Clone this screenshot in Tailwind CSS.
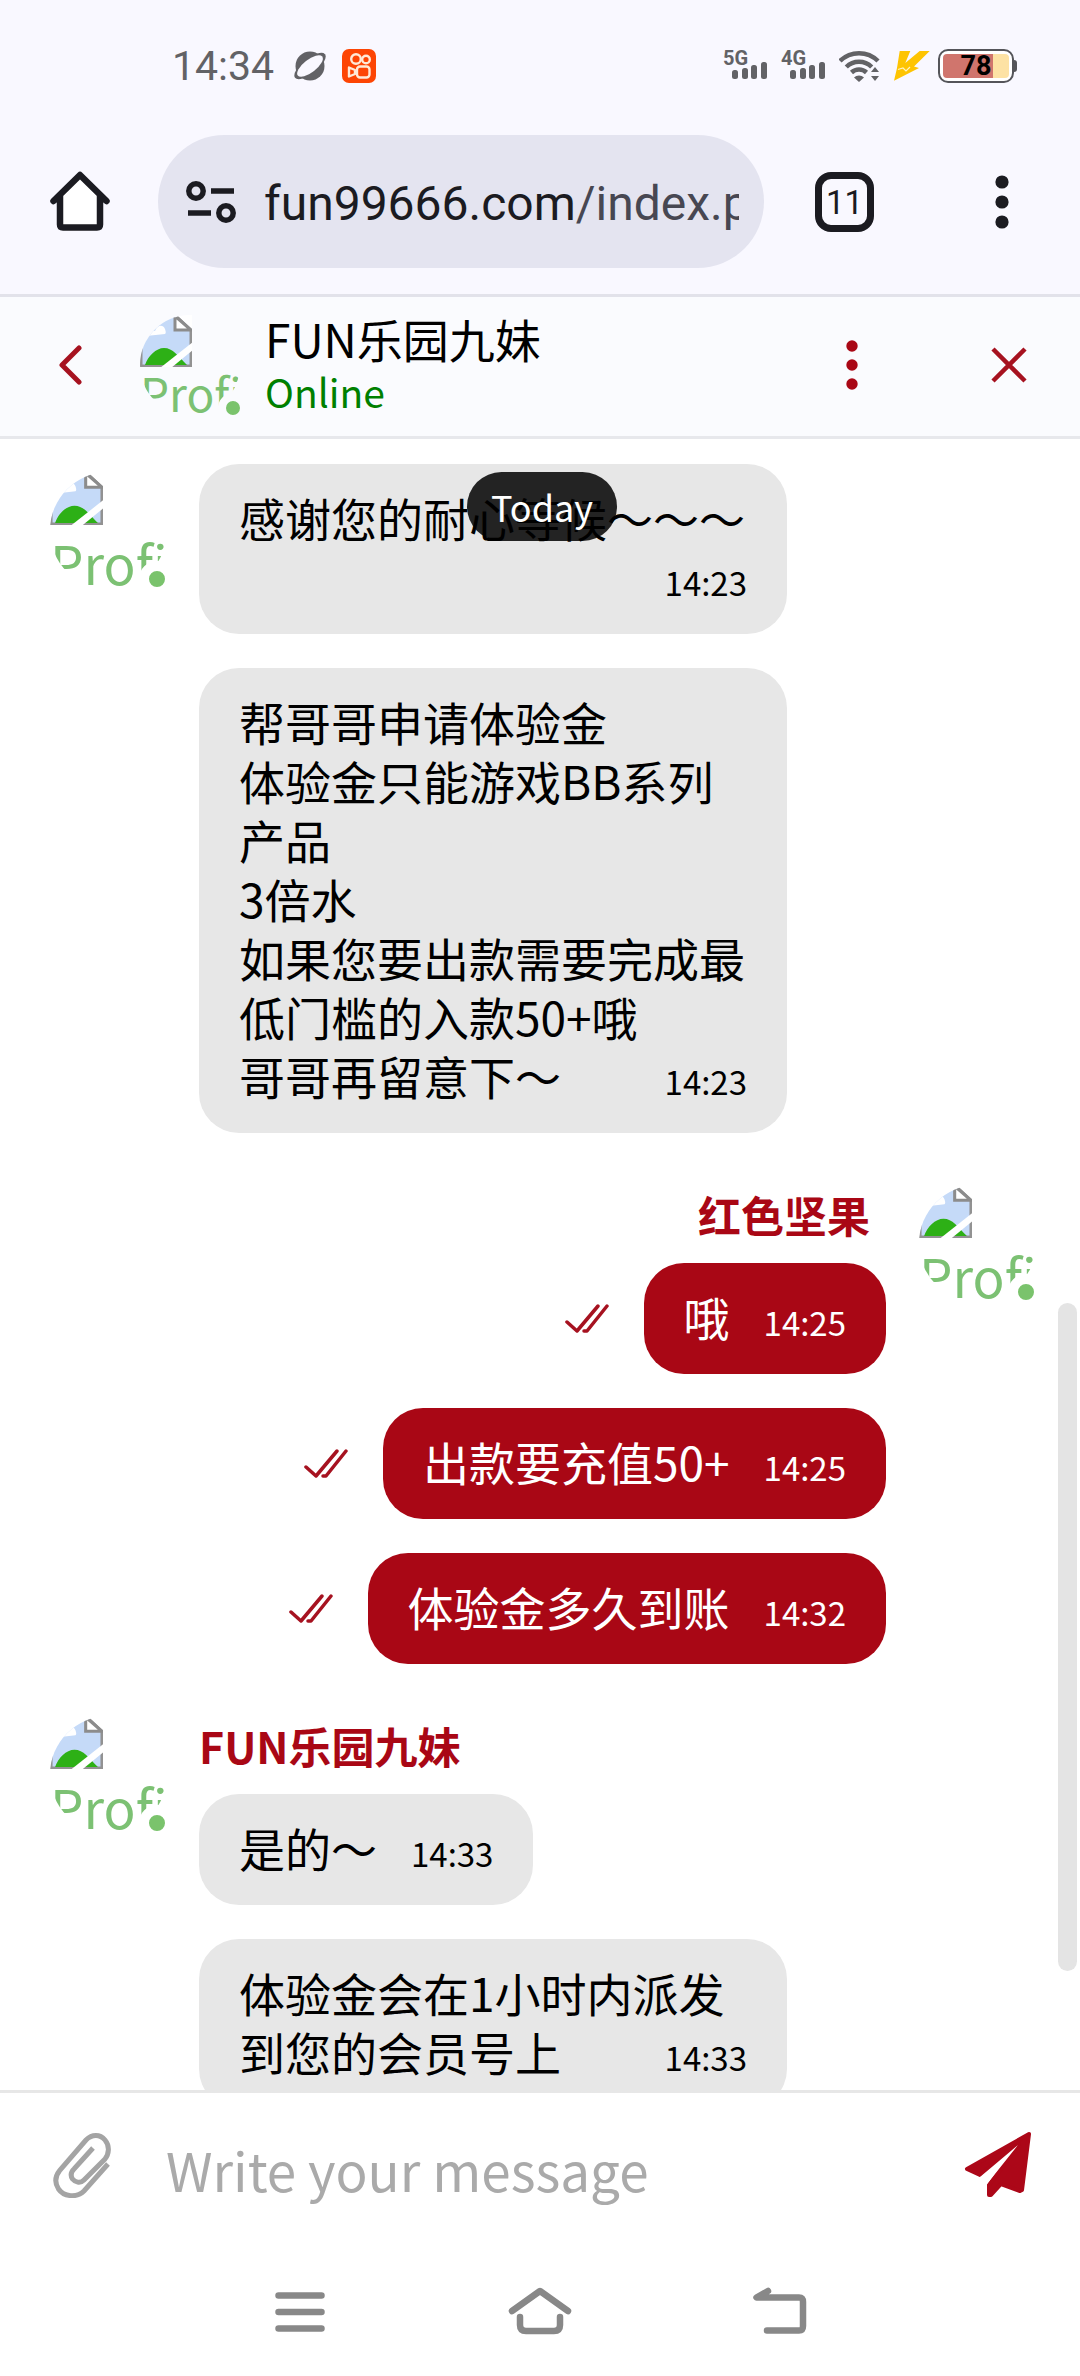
<!DOCTYPE html>
<html lang="zh-CN">
<head>
<meta charset="utf-8">
<meta name="viewport" content="width=device-width, initial-scale=1">
<title>FUN乐园九妹</title>
<script src="https://cdn.jsdelivr.net/npm/@tailwindcss/browser@4"></script>
</head>
<body class="flex h-screen flex-col overflow-hidden bg-white font-['Noto_Sans_CJK_SC',sans-serif] text-black">

<!-- shared icons -->
<svg class="hidden" aria-hidden="true">
  <symbol id="broken" viewBox="0 0 52 52">
    <path d="M1 1H36L51 15V51H1Z" fill="#c5daf8" stroke="#929292" stroke-width="3"/>
    <path d="M6 21c2-5 7-6 9-5c2-6 8-7 10-2c1 3 1 4 0 5z" fill="#fff"/>
    <path d="M5 50c3-9 11-17 19-17c9 0 14 8 23 17z" fill="#2db016"/>
    <path d="M35 1v14h16z" fill="#fff" stroke="#8c8c8c" stroke-width="3"/>
    <path d="M36 -1L53 14V-1Z" fill="#fff"/>
    <path d="M20 53H31L53 35V27Z" fill="#fff"/>
  </symbol>
  <symbol id="ticks" viewBox="0 0 44 30">
    <path d="M2 18L12 27L33 2M19 27L22 27L42 2" fill="none" stroke="#a61220" stroke-width="3.500" stroke-linecap="round" stroke-linejoin="round"/>
  </symbol>
</svg>

<!-- status bar -->
<div class="flex h-[132px] shrink-0 items-start justify-between bg-[#f9f8ff] pl-[172px] pr-[63px] pt-[42px] font-[Roboto,sans-serif] text-[#626266]">
  <div class="flex h-12 items-center">
    <span class="text-[41px] leading-[48px]">14:34</span>
    <svg class="ml-[18px] h-[34px] w-[36px]" viewBox="0 0 36 34" aria-hidden="true">
      <circle cx="18" cy="17" r="14.5" fill="#626266"/>
      <g transform="rotate(-38 18 17)"><ellipse cx="18" cy="17" rx="19" ry="7.500" fill="#626266"/><ellipse cx="18" cy="17" rx="15.500" ry="6.500" fill="#f9f8ff"/></g>
    </svg>
    <svg class="ml-[14px] size-[34px]" viewBox="0 0 34 34" aria-hidden="true">
      <rect width="34" height="34" rx="7" fill="#fd4504"/>
      <g fill="none" stroke="#ffe9d6" stroke-width="2.400" stroke-linejoin="round"><circle cx="14" cy="10" r="4.800"/><circle cx="24" cy="10.500" r="3.800"/><rect x="15" y="17.500" width="12.500" height="11" rx="3"/><path d="M7 18.500L13 21V25L7 27.500Z"/></g>
    </svg>
  </div>
  <div class="flex h-12 items-center text-[20px] font-bold leading-5">
    <div class="flex h-8 flex-col">
      <span class="leading-4">5G</span>
      <svg class="-mt-1 ml-[9px] h-[18px] w-9" viewBox="0 0 36 18" fill="#626266"><rect y="8" width="6" height="9" rx="2.500"/><rect x="10" y="6" width="6" height="11" rx="2.500"/><rect x="19" y="3" width="6" height="14" rx="2.500"/><rect x="29" width="6" height="17" rx="2.500"/></svg>
    </div>
    <div class="ml-[13px] flex h-8 flex-col">
      <span class="leading-4">4G</span>
      <svg class="-mt-1 ml-[9px] h-[18px] w-9" viewBox="0 0 36 18" fill="#626266"><rect y="8" width="6" height="9" rx="2.500"/><rect x="10" y="6" width="6" height="11" rx="2.500"/><rect x="19" y="3" width="6" height="14" rx="2.500"/><rect x="29" width="6" height="17" rx="2.500"/></svg>
    </div>
    <svg class="ml-[13px] h-8 w-[42px]" viewBox="0 0 42 32" aria-hidden="true">
      <g fill="none" stroke="#626266" stroke-width="4.500"><path d="M1 11A27 27 0 0 1 39 11"/><path d="M7.300 17A18 18 0 0 1 32.700 17"/><path d="M12.500 22.500A11 11 0 0 1 27.500 22.500"/></g>
      <path d="M20 32L15 27.500A7 7 0 0 1 25 27.500Z" fill="#626266"/>
      <path d="M36 14L43 23L36 33L30 23Z" fill="#f9f8ff"/>
      <path d="M36 17l4 5h-8zM36 31l4-5h-8z" fill="#626266"/>
    </svg>
    <svg class="ml-[13px] h-[30px] w-9" viewBox="0 0 36 30" aria-hidden="true"><path d="M5.700 0H16.300L11.300 12L25.700 0H35.700L20 15.500L25 17L0 29.700L3 17Z" fill="#fec402"/><path d="M4 18.500L9 17L12 20L16 16" fill="none" stroke="#fff3c4" stroke-width="1.200"/></svg>
    <div class="ml-2 flex items-center">
      <div class="h-[34px] w-[76px] rounded-[10px] border-2 border-[#55555a] bg-white p-[3px]">
        <div class="flex h-full items-center justify-center rounded-[4px] bg-linear-to-r from-[#d0756d] from-76% to-[#fde2a4] to-76% text-[27px] font-bold text-black">78</div>
      </div>
      <div class="h-3 w-[3px] rounded-r bg-[#55555a]"></div>
    </div>
  </div>
</div>

<!-- browser toolbar -->
<div class="flex h-[165px] shrink-0 items-start border-b-[3px] border-[#e2e2ea] bg-[#f9f8ff] pl-[50px] pr-[71px] pt-[3px] font-[Roboto,sans-serif] text-[#1b1b21]">
  <button class="mt-[36px] shrink-0" aria-label="Home">
    <svg class="size-[60px]" viewBox="0 0 60 60"><path d="M10 26V54Q10 57 13 57H47Q50 57 50 54V26L30 6Z" fill="#fff"/><path d="M3.500 30L30 4L56.500 30M10 25V53.500Q10 56.500 13 56.500H47Q50 56.500 50 53.500V25" fill="none" stroke="#1b1b21" stroke-width="6.500" stroke-linecap="round" stroke-linejoin="round"/></svg>
  </button>
  <div class="ml-12 flex h-[133px] min-w-0 flex-1 items-center rounded-full bg-[#e4e4f0] pl-7 pr-[25px]">
    <svg class="h-[42px] w-[50px] shrink-0" viewBox="0 0 50 42" fill="none" stroke="#1b1b21" stroke-width="5.500"><circle cx="10" cy="10" r="7.200"/><circle cx="40" cy="32" r="7.200"/><path d="M25 10H48M2 32H25"/></svg>
    <div class="ml-7 min-w-0 flex-1 overflow-hidden whitespace-nowrap pt-1 text-[48px] leading-[60px]">fun99666.com<span class="text-[#474752]">/index.php</span></div>
  </div>
  <button class="ml-[51px] mt-[37px] flex h-[60px] w-[59px] shrink-0 items-center justify-center rounded-[16px] border-[7px] border-[#1b1b21] text-[33px] leading-none" aria-label="11 tabs">11</button>
  <button class="ml-[121px] mt-[39px] shrink-0" aria-label="Browser menu">
    <svg class="h-[56px] w-[14px]" viewBox="0 0 14 56" fill="#1b1b21"><circle cx="7" cy="8" r="6.600"/><circle cx="7" cy="28" r="6.600"/><circle cx="7" cy="48" r="6.600"/></svg>
  </button>
</div>

<!-- chat header -->
<header class="flex h-[142px] shrink-0 items-center border-b-[3px] border-[#e7e8ec] bg-[#fafbfe] pb-1 pl-[58px] pr-[53px]">
  <button aria-label="Back"><svg class="h-[40px] w-[24px]" viewBox="0 0 24 40"><path d="M21 3L4 20L21 37" fill="none" stroke="#a61220" stroke-width="5" stroke-linecap="round" stroke-linejoin="round"/></svg></button>
  <div class="relative ml-[58px] size-[100px] shrink-0">
    <div class="size-full overflow-hidden rounded-full">
      <svg class="size-[52px]"><use href="#broken"/></svg>
      <span class="block whitespace-nowrap text-[46px] leading-[50px] text-[#7cc173]">Profile</span>
    </div>
    <span class="absolute -bottom-2 -right-2 size-[30px] rounded-full border-8 border-[#fafbfe] bg-[#7ac36c]"></span>
  </div>
  <div class="ml-[25px] min-w-0 flex-1">
    <h1 class="truncate text-[46px] leading-[53px]">FUN乐园九妹</h1>
    <p class="text-[39px] leading-[53px] text-[#008000]">Online</p>
  </div>
  <button class="mr-[133px] shrink-0" aria-label="Chat options"><svg class="h-[50px] w-[12px]" viewBox="0 0 12 50" fill="#a90715"><circle cx="6" cy="6" r="5.700"/><circle cx="6" cy="25" r="5.700"/><circle cx="6" cy="44" r="5.700"/></svg></button>
  <button class="shrink-0" aria-label="Close"><svg class="size-[36px]" viewBox="0 0 36 36"><path d="M2 2L34 34M34 2L2 34" stroke="#a61220" stroke-width="4.500"/></svg></button>
</header>

<!-- conversation -->
<main class="relative flex min-h-0 flex-1 flex-col gap-[52px] overflow-hidden pt-[25px] text-[46px] leading-[59px]">

  <section class="flex items-start gap-8 pl-[50px]">
    <div class="relative mt-2 size-[117px] shrink-0">
      <div class="size-full overflow-hidden rounded-full">
        <svg class="size-[53px]"><use href="#broken"/></svg>
        <span class="block whitespace-nowrap text-[53px] leading-[74px] text-[#7cc173]">Profile</span>
      </div>
      <span class="absolute -bottom-2 -right-2 size-9 rounded-full border-10 border-white bg-[#7ac36c]"></span>
    </div>
    <div class="flex flex-col items-start gap-[34px]">
      <div class="flow-root w-[588px] rounded-[40px] bg-[#e7e7e7] px-10 pb-7 pt-6">感谢您的耐心等候～～～<time class="float-right ml-[34px] mt-[11px] text-[33px] leading-[48px]">14:23</time></div>
      <div class="flow-root w-[588px] rounded-[40px] bg-[#e7e7e7] px-10 pb-7 pt-6">帮哥哥申请体验金<br>体验金只能游戏BB系列产品<br>3倍水<br>如果您要出款需要完成最低门槛的入款50+哦<br>哥哥再留意下～<time class="float-right ml-[34px] mt-[11px] text-[33px] leading-[48px]">14:23</time></div>
    </div>
  </section>

  <section class="flex items-start justify-end gap-[33px] pr-[44px]">
    <div class="flex flex-col items-end">
      <h2 class="mb-5 pr-4 text-[43px] font-bold leading-[58px] text-[#a90715]">红色坚果</h2>
      <div class="flex flex-col items-end gap-[34px] text-white">
        <div class="flex items-center gap-[35px]">
          <svg class="h-[30px] w-[44px]" role="img" aria-label="Read"><use href="#ticks"/></svg>
          <div class="flex gap-[34px] rounded-[40px] bg-[#a90715] px-10 pb-7 pt-6"><span>哦</span><time class="mt-[11px] text-[33px] leading-[48px]">14:25</time></div>
        </div>
        <div class="flex items-center gap-[35px]">
          <svg class="h-[30px] w-[44px]" role="img" aria-label="Read"><use href="#ticks"/></svg>
          <div class="flex gap-[34px] rounded-[40px] bg-[#a90715] px-10 pb-7 pt-6"><span>出款要充值50+</span><time class="mt-[11px] text-[33px] leading-[48px]">14:25</time></div>
        </div>
        <div class="flex items-center gap-[35px]">
          <svg class="h-[30px] w-[44px]" role="img" aria-label="Read"><use href="#ticks"/></svg>
          <div class="flex gap-[34px] rounded-[40px] bg-[#a90715] px-10 pb-7 pt-6"><span>体验金多久到账</span><time class="mt-[11px] text-[33px] leading-[48px]">14:32</time></div>
        </div>
      </div>
    </div>
    <div class="relative size-[117px] shrink-0">
      <div class="size-full overflow-hidden rounded-full">
        <svg class="size-[53px]"><use href="#broken"/></svg>
        <span class="block whitespace-nowrap text-[53px] leading-[74px] text-[#7cc173]">Profile</span>
      </div>
      <span class="absolute -bottom-2 -right-2 size-9 rounded-full border-10 border-white bg-[#7ac36c]"></span>
    </div>
  </section>

  <section class="flex items-start gap-8 pl-[50px]">
    <div class="relative size-[117px] shrink-0">
      <div class="size-full overflow-hidden rounded-full">
        <svg class="size-[53px]"><use href="#broken"/></svg>
        <span class="block whitespace-nowrap text-[53px] leading-[74px] text-[#7cc173]">Profile</span>
      </div>
      <span class="absolute -bottom-2 -right-2 size-9 rounded-full border-10 border-white bg-[#7ac36c]"></span>
    </div>
    <div class="flex flex-col items-start">
      <h2 class="mb-5 text-[43px] font-bold leading-[58px] text-[#a90715]">FUN乐园九妹</h2>
      <div class="flex flex-col items-start gap-[34px]">
        <div class="flex gap-[34px] rounded-[40px] bg-[#e7e7e7] px-10 pb-7 pt-6"><span>是的～</span><time class="mt-[11px] text-[33px] leading-[48px]">14:33</time></div>
        <div class="flow-root w-[588px] rounded-[40px] bg-[#e7e7e7] px-10 pb-7 pt-6">体验金会在1小时内派发到您的会员号上<time class="float-right ml-[34px] mt-[11px] text-[33px] leading-[48px]">14:33</time></div>
      </div>
    </div>
  </section>

  <div class="absolute inset-x-0 top-[33px] flex justify-center pl-1">
    <span class="rounded-full bg-black/85 px-6 text-[36px] leading-[69px] text-white">Today</span>
  </div>
  <div class="absolute bottom-[119px] right-[3px] h-[668px] w-[19px] rounded-full bg-[#e4e4e4]"></div>
</main>

<!-- composer -->
<form class="flex h-[147px] shrink-0 items-center border-t-[3px] border-[#e7e7e7] pl-[53px] pr-[48px]">
  <button type="button" class="shrink-0" aria-label="Attach file">
    <svg class="h-[66px] w-[59px]" viewBox="0 0 59 66"><path d="M55 32L31 59C24 66 11 65 5.500 57C1 50 3 43 7 38L33 8C39 2 47 2 52 8C57 14 56 22 52 27L31 48C27 52 22 50 19.500 47C17 43 18 40 21 37L40 16" fill="none" stroke="#a4a4a4" stroke-width="5"/></svg>
  </button>
  <input type="text" aria-label="Message" placeholder="Write your message" class="ml-[54px] h-[88px] min-w-0 flex-1 bg-transparent pt-2 text-[53px] leading-[80px] outline-none placeholder:text-[#aaaaaa]">
  <button type="submit" class="shrink-0" aria-label="Send">
    <svg class="h-[68px] w-[68px]" viewBox="0 0 68 68"><path d="M65 3L3 38L16 44L55 13L25 54V64L27 64L37 53L56 60L58 59Z" fill="#ac0718" stroke="#ac0718" stroke-width="4" stroke-linejoin="round"/><path d="M16 46L54 14L23 53L21 49Z" fill="#fff"/></svg>
  </button>
</form>

<!-- system navigation -->
<nav class="mx-auto grid h-[139px] w-2/3 shrink-0 grid-cols-3 place-items-center pt-2">
  <button aria-label="Recent apps"><svg class="h-[48px] w-[50px]" viewBox="0 0 50 48" stroke="#888" stroke-width="6.500" stroke-linecap="round"><path d="M3.500 8.500H46.500M3.500 25H46.500M3.500 41.500H46.500"/></svg></button>
  <button aria-label="Home screen"><svg class="h-[48px] w-[64px]" viewBox="0 0 64 48" fill="none" stroke="#888" stroke-width="6.500" stroke-linecap="round" stroke-linejoin="round"><path d="M4 24L32 4L60 24M12 30V38Q12 44 18 44H46Q52 44 52 38V30"/></svg></button>
  <button aria-label="Back"><svg class="h-[48px] w-[54px]" viewBox="0 0 54 48" fill="none" stroke="#888" stroke-width="6.500" stroke-linecap="round" stroke-linejoin="round"><path d="M15 4L3.500 10.500H46Q50 10.500 50 15V39Q50 43.500 46 43.500H14"/></svg></button>
</nav>
</body>
</html>
